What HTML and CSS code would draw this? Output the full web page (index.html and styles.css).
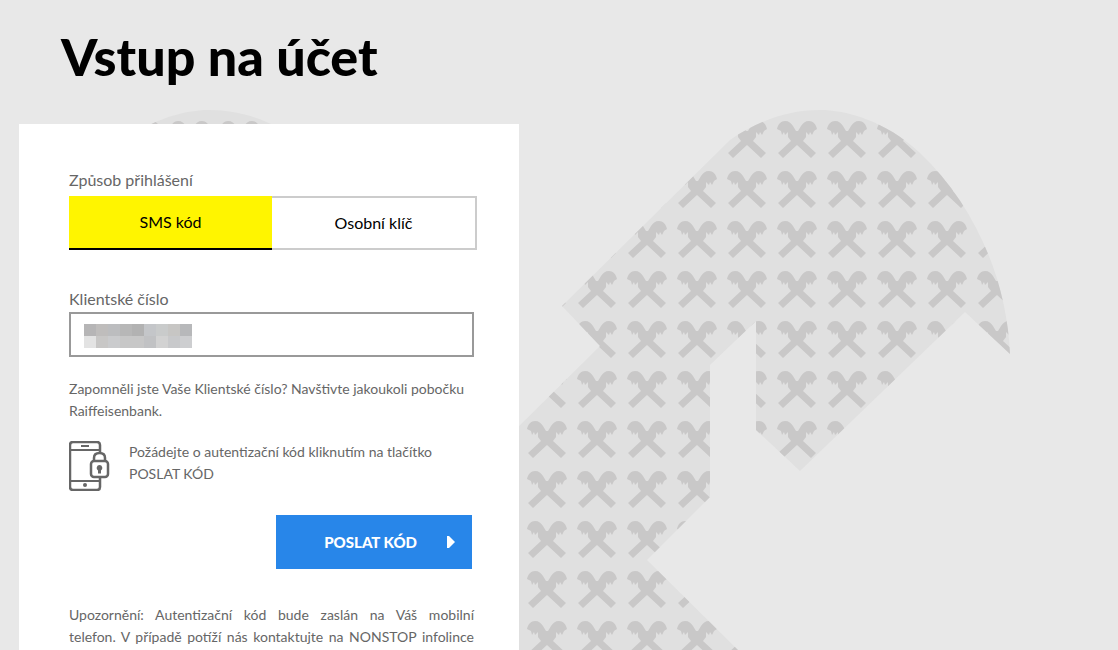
FILE: index.html
```html
<!DOCTYPE html>
<html lang="cs">
<head>
    <meta charset="UTF-8">
    <meta name="viewport" content="width=device-width, initial-scale=1">
    <title>Vstup na účet</title>
    <link rel="stylesheet" href="styles.css">
</head>
<body>
    <svg class="backdrop" width="1118" height="650" viewBox="0 0 1118 650" aria-hidden="true">
        <defs>
            <pattern id="crosses" x="22" y="15" width="50" height="50" patternUnits="userSpaceOnUse">
                <path fill="#c9c8c8" d="M6 38 L19 26 L16 22 L16 17 L13 20 L12 17 L10 20 L9 16 L5 14 C6 9 9 6 13 6 C17 6 19 8 21 11 L24 16 H26 L29 11 C31 8 33 6 37 6 C41 6 44 9 45 14 L42 16 L40 20 L38 17 L37 20 L34 17 L34 22 L31 26 L44 38 L39 43 L25 30 L11 43 Z"/>
            </pattern>
            <pattern id="crosses-left" href="#crosses" x="14"/>
            <path id="head" d="M562 306 L730 140 C756 122 786 110 820 110 C845 110 885 120 920 153 C975 205 1007 280 1010 354 L965 312 L800 471 L756 430 V321 L710 365 V497 L647 560 L738 650 H293 L600 346 Z"/>
        </defs>
        <g transform="translate(1029 0) scale(-1 1)">
            <use href="#head" fill="#e0e0e0"/>
            <use href="#head" fill="url(#crosses-left)"/>
        </g>
        <use href="#head" fill="#e0e0e0"/>
        <use href="#head" fill="url(#crosses)"/>
    </svg>

    <main class="page">
        <h1>Vstup na účet</h1>

        <form class="card" onsubmit="event.preventDefault();">
            <p class="caption" id="method">Způsob přihlášení</p>
            <div class="switch" role="group" aria-labelledby="method">
                <button type="button" class="tab active" aria-pressed="true">SMS kód</button>
                <button type="button" class="tab" aria-pressed="false">Osobní klíč</button>
            </div>

            <label class="caption" for="client">Klientské číslo</label>
            <div class="field">
                <input type="text" id="client" name="client">
                <svg class="mask" width="108" height="24" viewBox="0 0 9 2" shape-rendering="crispEdges" aria-hidden="true">
                    <path fill="#b6b5b6" d="M0 0h1v1H0z"/>
                    <path fill="#bfbdbc" d="M1 0h1v1H1z"/>
                    <path fill="#bcbdbf" d="M2 0h1v1H2z"/>
                    <path fill="#b7b7b7" d="M3 0h1v1H3z"/>
                    <path fill="#b2b2b2" d="M4 0h1v1H4z"/>
                    <path fill="#c4c6c9" d="M5 0h1v1H5z"/>
                    <path fill="#c9cbcb" d="M6 0h1v1H6z"/>
                    <path fill="#c7c6c4" d="M7 0h1v1H7z"/>
                    <path fill="#b7b8ba" d="M8 0h1v1H8z"/>
                    <path fill="#e3e3e3" d="M0 1h1v1H0z"/>
                    <path fill="#c8c7c6" d="M1 1h1v1H1z"/>
                    <path fill="#cacbcd" d="M2 1h1v1H2z"/>
                    <path fill="#c7c7c7" d="M3 1h2v1H3z"/>
                    <path fill="#c1c2c4" d="M5 1h1v1H5z"/>
                    <path fill="#d2d2d2" d="M6 1h1v1H6z"/>
                    <path fill="#c8c9cb" d="M7 1h1v1H7z"/>
                    <path fill="#cdced0" d="M8 1h1v1H8z"/>
                </svg>
            </div>

            <p class="help">Zapomněli jste Vaše Klientské číslo? Navštivte jakoukoli pobočku Raiffeisenbank.</p>

            <div class="hint">
                <svg class="phone" width="41" height="50" viewBox="0 0 41 50" fill="none" stroke="#666" stroke-width="2.500" aria-hidden="true">
                    <path d="M31 11V4Q31 1 28 1H4Q1 1 1 4V46Q1 49 4 49H28Q31 49 31 46V37"/>
                    <path stroke-width="2" d="M1 9H31M1 40H31M12 5H20"/>
                    <circle cx="16" cy="44" r="2" fill="#666" stroke="none"/>
                    <path d="M25 20V17Q25 12 30.500 12Q36 12 36 17V20"/>
                    <rect x="22" y="20" width="17" height="16" rx="3"/>
                    <path fill="#666" stroke="none" d="M30.500 24a3 3 0 0 1 1.500 5.500V32.500H29V29.500A3 3 0 0 1 30.500 24z"/>
                </svg>
                <p>Požádejte o autentizační kód kliknutím na tlačítko POSLAT KÓD</p>
            </div>

            <button type="submit" class="send">
                <span>POSLAT KÓD</span>
                <svg width="8" height="12" viewBox="0 0 8 12" aria-hidden="true"><path fill="#fff" d="M0 0H2L8 6L2 12H0z"/></svg>
            </button>

            <p class="notice">Upozornění: Autentizační kód bude zaslán na Váš mobilní<br>telefon. V případě potíží nás kontaktujte na NONSTOP infolince</p>
        </form>
    </main>
</body>
</html>
```
FILE: styles.css
```css
* {
    box-sizing: border-box;
}

body {
    font-family: Lato, sans-serif;
    font-size: 14px;
    line-height: 22px;
    background-color: #e8e8e8;
    color: #666;
    margin: 0;
}

h1, p {
    margin: 0;
}

/* horse heads behind the form */
.backdrop {
    position: absolute;
    top: 0;
    left: 0;
    z-index: -1;
}

.page {
    display: flex;
    flex-direction: column;
    min-height: 100vh;
    padding: 0 19px;
}

h1 {
    color: #000;
    font-size: 52px;
    font-weight: 900;
    line-height: 60px;
    padding: 26px 0 38px 42px;
}

.card {
    display: flex;
    flex-direction: column;
    flex: 1;
    width: 100%;
    max-width: 500px;
    padding: 45px 45px 0 50px;
    background-color: #fff;
}

.caption {
    font-size: 16px;
    line-height: 22px;
}

.switch {
    display: flex;
    height: 54px;
    margin: 5px -3px 38px 0;
}

.tab {
    flex: 1;
    padding: 0 0 2px;
    border: 2px solid #ccc;
    border-left: none;
    background-color: #fff;
    color: #000;
    font-family: inherit;
    font-size: 16px;
    cursor: pointer;
}

.tab.active {
    border: none;
    border-bottom: 2px solid #000;
    background-color: #fff500;
}

.field {
    position: relative;
    margin: 2px 0 21px;
}

.field input {
    display: block;
    width: 100%;
    height: 45px;
    padding: 0 13px;
    border: 2px solid #999;
    font-family: inherit;
    font-size: 16px;
}

.mask {
    position: absolute;
    top: 12px;
    left: 15px;
}

.hint {
    display: flex;
    gap: 19px;
    margin: 19px 0 24px;
}

.phone {
    flex: none;
}

.send {
    display: flex;
    align-items: center;
    justify-content: flex-end;
    align-self: flex-end;
    gap: 30px;
    width: 196px;
    height: 54px;
    margin-right: 2px;
    padding: 0 17px;
    border: none;
    background-color: #2886e9;
    color: #fff;
    font-family: inherit;
    font-size: 15px;
    font-weight: 900;
    cursor: pointer;
}

.notice {
    margin-top: 35px;
    text-align: justify;
    text-align-last: justify;
}
```
